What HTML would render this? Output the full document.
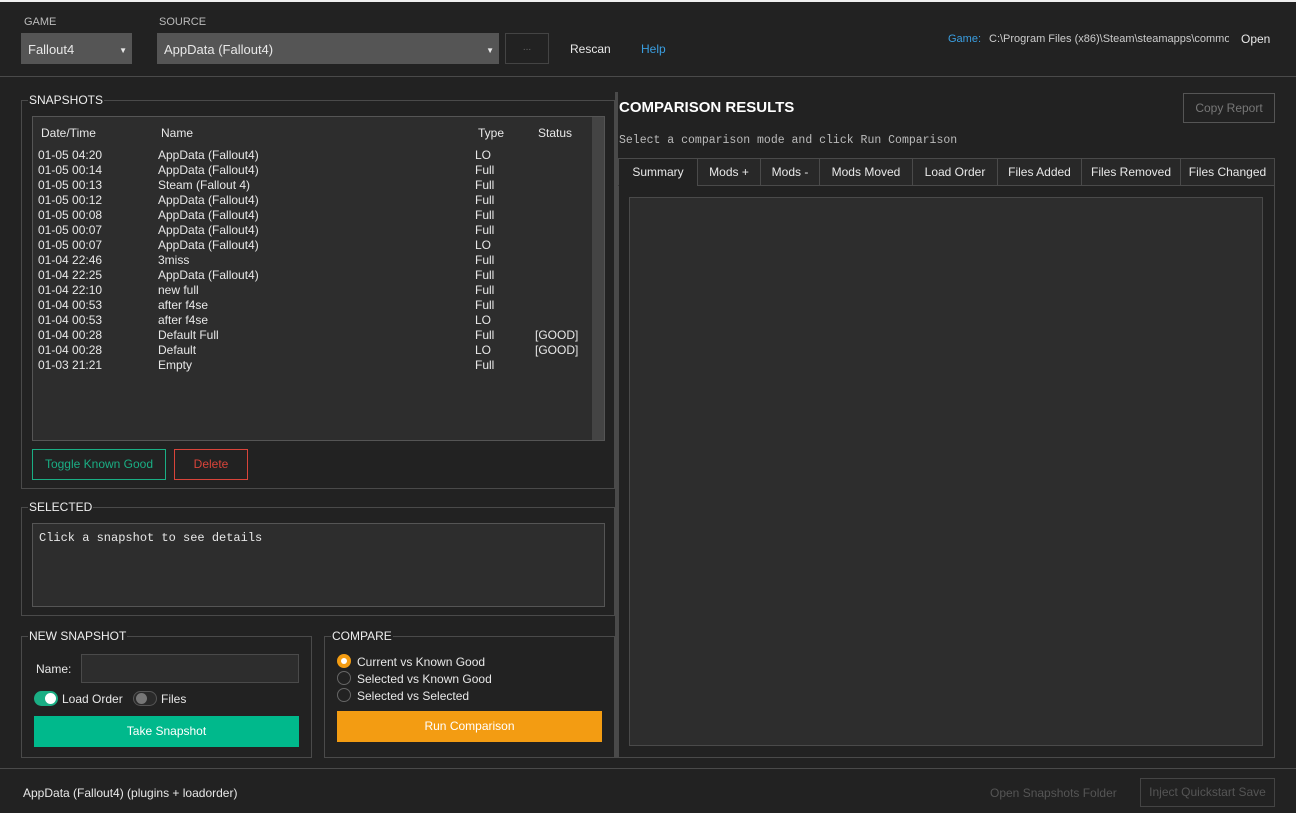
<!DOCTYPE html>
<html><head><meta charset="utf-8"><style>
*{box-sizing:border-box;margin:0;padding:0}
body{width:1296px;height:813px;background:#222;font-family:"Liberation Sans",sans-serif;font-size:12px;color:#e8e8e8;position:relative;overflow:hidden}
.a{position:absolute;white-space:nowrap}
.grp{position:absolute;border:1px solid #4a4a4a}
.lbl{position:absolute;background:#222;padding:0 1px;font-size:12px;color:#eee;top:-8px;left:6px}
.mono{font-family:"Liberation Mono",monospace}
.tab{position:absolute;top:158px;height:28px;border:1px solid #4a4a4a;background:#282828;text-align:center;line-height:27px}
</style></head><body>
<div class="a" style="left:0;top:0;width:1296px;height:2px;background:#f0f0f0"></div>
<div class="a" style="left:24px;top:16px;font-size:11px;color:#bbb">GAME</div>
<div class="a" style="left:159px;top:16px;font-size:11px;color:#bbb">SOURCE</div>
<div class="a" style="left:21px;top:33px;width:111px;height:31px;background:#555;padding:9px 7px;font-size:13px">Fallout4<span style="position:absolute;right:5px;top:13px;font-size:8px">▼</span></div>
<div class="a" style="left:157px;top:33px;width:342px;height:31px;background:#555;padding:9px 7px;font-size:13px">AppData (Fallout4)<span style="position:absolute;right:5px;top:13px;font-size:8px">▼</span></div>
<div class="a" style="left:505px;top:33px;width:44px;height:31px;border:1px solid #444;color:#666;text-align:center;line-height:28px;font-size:10px">...</div>
<div class="a" style="left:570px;top:42px">Rescan</div>
<div class="a" style="left:641px;top:42px;color:#3a9ee0">Help</div>
<div class="a" style="left:948px;top:33px;color:#3a9ee0;font-size:11px">Game:</div>
<div class="a" style="left:989px;top:33px;width:240px;overflow:hidden;color:#ccc;font-size:11px">C:\Program Files (x86)\Steam\steamapps\common</div>
<div class="a" style="left:1241px;top:32px">Open</div>
<div class="a" style="left:0;top:76px;width:1296px;height:1px;background:#4a4a4a"></div>

<div class="grp" style="left:21px;top:100px;width:594px;height:389px"><div class="lbl">SNAPSHOTS</div></div>
<div class="a" style="left:32px;top:116px;width:573px;height:325px;background:#2d2d2d;border:1px solid #555"></div>
<div class="a" style="left:592px;top:117px;width:12px;height:323px;background:#444"></div>
<div class="a" style="left:41px;top:126px">Date/Time</div>
<div class="a" style="left:161px;top:126px">Name</div>
<div class="a" style="left:478px;top:126px">Type</div>
<div class="a" style="left:538px;top:126px">Status</div>
<div class="a" style="left:38px;top:148px;line-height:15px">01-05 04:20<br>01-05 00:14<br>01-05 00:13<br>01-05 00:12<br>01-05 00:08<br>01-05 00:07<br>01-05 00:07<br>01-04 22:46<br>01-04 22:25<br>01-04 22:10<br>01-04 00:53<br>01-04 00:53<br>01-04 00:28<br>01-04 00:28<br>01-03 21:21</div>
<div class="a" style="left:158px;top:148px;line-height:15px">AppData (Fallout4)<br>AppData (Fallout4)<br>Steam (Fallout 4)<br>AppData (Fallout4)<br>AppData (Fallout4)<br>AppData (Fallout4)<br>AppData (Fallout4)<br>3miss<br>AppData (Fallout4)<br>new full<br>after f4se<br>after f4se<br>Default Full<br>Default<br>Empty</div>
<div class="a" style="left:475px;top:148px;line-height:15px">LO<br>Full<br>Full<br>Full<br>Full<br>Full<br>LO<br>Full<br>Full<br>Full<br>Full<br>LO<br>Full<br>LO<br>Full</div>
<div class="a" style="left:535px;top:328px;line-height:15px">[GOOD]<br>[GOOD]</div>
<div class="a" style="left:32px;top:449px;width:134px;height:31px;border:1px solid #1aae84;color:#1aae84;text-align:center;line-height:29px">Toggle Known Good</div>
<div class="a" style="left:174px;top:449px;width:74px;height:31px;border:1px solid #d9443a;color:#d9443a;text-align:center;line-height:29px">Delete</div>

<div class="grp" style="left:21px;top:507px;width:594px;height:109px"><div class="lbl">SELECTED</div></div>
<div class="a mono" style="left:32px;top:523px;width:573px;height:84px;background:#2d2d2d;border:1px solid #555;padding:7px 6px;font-size:12px">Click a snapshot to see details</div>

<div class="grp" style="left:21px;top:636px;width:291px;height:122px"><div class="lbl">NEW SNAPSHOT</div></div>
<div class="a" style="left:36px;top:662px">Name:</div>
<div class="a" style="left:81px;top:654px;width:218px;height:29px;background:#2d2d2d;border:1px solid #4a4a4a"></div>
<div class="a" style="left:34px;top:691px;width:24px;height:15px;border-radius:8px;background:#1aae84"><div style="position:absolute;right:2px;top:2px;width:11px;height:11px;border-radius:50%;background:#fff"></div></div>
<div class="a" style="left:62px;top:692px">Load Order</div>
<div class="a" style="left:133px;top:691px;width:24px;height:15px;border-radius:8px;background:#2a2a2a;border:1px solid #555"><div style="position:absolute;left:2px;top:1px;width:11px;height:11px;border-radius:50%;background:#777"></div></div>
<div class="a" style="left:161px;top:692px">Files</div>
<div class="a" style="left:34px;top:716px;width:265px;height:31px;background:#00b98c;text-align:center;line-height:31px;color:#fff">Take Snapshot</div>

<div class="grp" style="left:324px;top:636px;width:291px;height:122px"><div class="lbl">COMPARE</div></div>
<div class="a" style="left:337px;top:654px;width:14px;height:14px;border-radius:50%;background:#f39c12"><div style="position:absolute;left:4px;top:4px;width:6px;height:6px;border-radius:50%;background:#fff"></div></div>
<div class="a" style="left:337px;top:671px;width:14px;height:14px;border-radius:50%;border:1px solid #666"></div>
<div class="a" style="left:337px;top:688px;width:14px;height:14px;border-radius:50%;border:1px solid #666"></div>
<div class="a" style="left:357px;top:654px;line-height:17px">Current vs Known Good<br>Selected vs Known Good<br>Selected vs Selected</div>
<div class="a" style="left:337px;top:711px;width:265px;height:31px;background:#f39c12;text-align:center;line-height:31px;color:#fff">Run Comparison</div>

<div class="a" style="left:615px;top:92px;width:3px;height:666px;background:#4a4a4a"></div>
<div class="a" style="left:619px;top:99px;font-size:15px;font-weight:bold;color:#fff">COMPARISON RESULTS</div>
<div class="a" style="left:1183px;top:93px;width:92px;height:30px;border:1px solid #555;color:#777;text-align:center;line-height:28px">Copy Report</div>
<div class="a mono" style="left:619px;top:134px;color:#bbb;font-size:11.5px">Select a comparison mode and click Run Comparison</div>
<div class="a" style="left:618px;top:185px;width:657px;height:573px;border:1px solid #4a4a4a"></div>
<div class="a" style="left:629px;top:197px;width:634px;height:549px;background:#2d2d2d;border:1px solid #4a4a4a"></div>
<div class="tab" style="left:618px;width:80px;background:#222;border-bottom-color:#222">Summary</div>
<div class="tab" style="left:697px;width:64px">Mods +</div>
<div class="tab" style="left:760px;width:60px">Mods -</div>
<div class="tab" style="left:819px;width:94px">Mods Moved</div>
<div class="tab" style="left:912px;width:86px">Load Order</div>
<div class="tab" style="left:997px;width:85px">Files Added</div>
<div class="tab" style="left:1081px;width:100px">Files Removed</div>
<div class="tab" style="left:1180px;width:95px">Files Changed</div>

<div class="a" style="left:0;top:768px;width:1296px;height:1px;background:#4a4a4a"></div>
<div class="a" style="left:23px;top:786px">AppData (Fallout4) (plugins + loadorder)</div>
<div class="a" style="left:990px;top:786px;color:#555">Open Snapshots Folder</div>
<div class="a" style="left:1140px;top:778px;width:135px;height:29px;border:1px solid #444;color:#555;text-align:center;line-height:27px">Inject Quickstart Save</div>
</body></html>
